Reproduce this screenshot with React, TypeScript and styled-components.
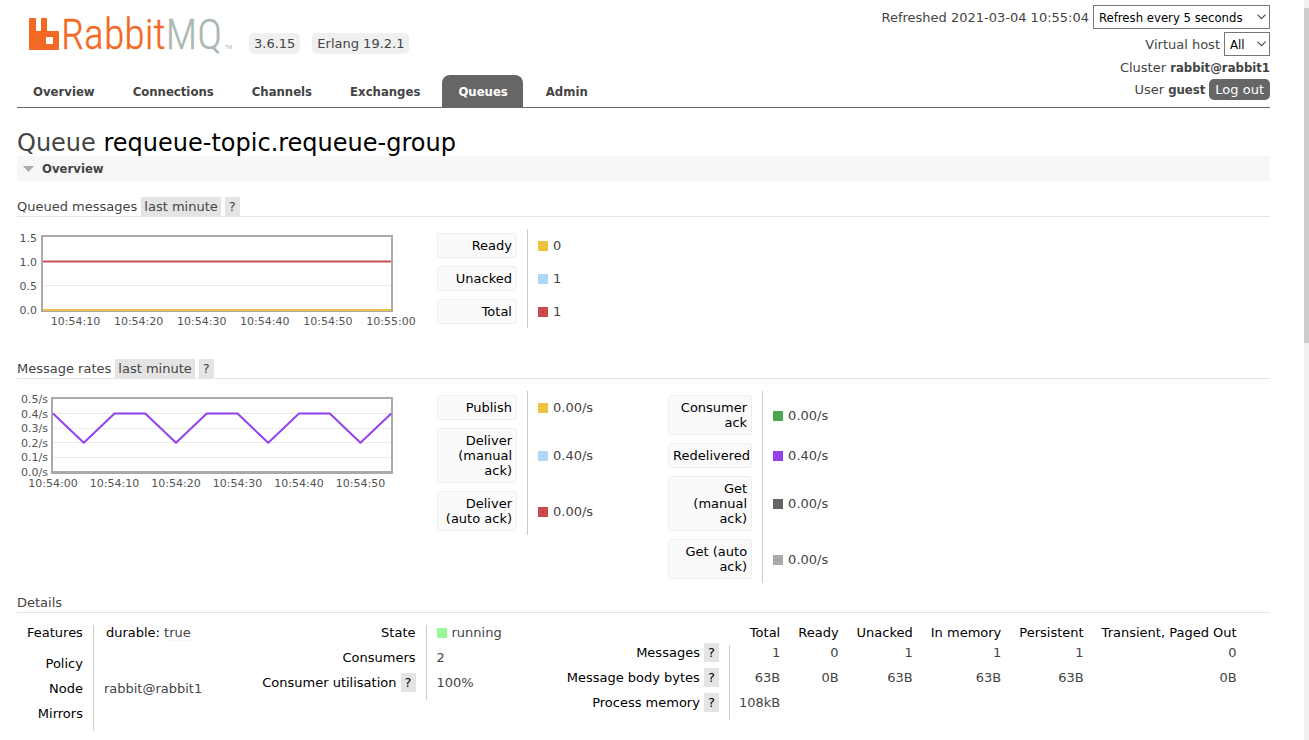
import React from "react";
import styled, { createGlobalStyle } from "styled-components";

const condensed = `"DejaVu Sans Condensed", "Noto Sans", sans-serif`;

const GlobalStyle = createGlobalStyle`
  * { box-sizing: border-box; }
  body {
    margin: 0;
    background: #fff;
    color: #444;
    font: 13px/15px Verdana, "DejaVu Sans", sans-serif;
  }
  button, select { font: inherit; margin: 0; }
`;

const Shell = styled.div`
  display: grid;
  grid-template-columns: minmax(0, 1fr) 5px;
  min-height: 100vh;
`;

const ScrollTrack = styled.div`
  background: #f0f0f0;
  padding-top: 8px;
`;

const ScrollThumb = styled.div`
  height: 335px;
  background: #cdcdcd;
`;

const Page = styled.div`
  padding: 0 34px 8px 17px;
`;

const Header = styled.header`
  display: flex;
  justify-content: space-between;
  border-bottom: 1px solid #666;
`;

const Brand = styled.div`
  display: flex;
  flex-direction: column;
  justify-content: space-between;
`;

const LogoRow = styled.div`
  display: flex;
  align-items: flex-start;
  gap: 12px;
  padding-left: 12px;
`;

const LogoLink = styled.a`
  display: block;
  height: 60px;
  margin-right: 4px;
`;

const Version = styled.span`
  margin-top: 33px;
  padding: 3px 5px;
  border-radius: 5px;
  background: #f0f0f0;
`;

const Tabs = styled.nav`
  display: flex;
  gap: 7px;
`;

const Tab = styled.a<{ $active?: boolean }>`
  padding: 9px 15px 8px 16px;
  border-radius: 8px 8px 0 0;
  font-family: ${condensed};
  font-weight: bold;
  text-decoration: none;
  color: ${(p) => (p.$active ? "#fff" : "#444")};
  background: ${(p) => (p.$active ? "#666" : "transparent")};
`;

const Status = styled.div`
  display: flex;
  flex-direction: column;
  align-items: flex-end;
  gap: 3px;
  padding: 5px 0 7px;
  b { font-family: ${condensed}; }
`;

const StatusRow = styled.div`
  display: flex;
  align-items: center;
  gap: 4px;
  min-height: 17px;
`;

const SelectBox = styled.span`
  position: relative;
  display: block;
  svg {
    position: absolute;
    right: 4px;
    top: 9px;
    pointer-events: none;
  }
`;

const Select = styled.select<{ $width: number }>`
  display: block;
  appearance: none;
  width: ${(p) => p.$width}px;
  height: 24px;
  padding: 0 5px;
  border: 1px solid #767676;
  border-radius: 0;
  background: #fff;
  color: #000;
  font-family: ${condensed};
`;

const LogoutButton = styled.button`
  padding: 3px 6px;
  border: 0;
  border-radius: 5px;
  background: #666;
  color: #fff;
`;

const Title = styled.h1`
  margin: 22px 0 0;
  font-size: 24px;
  line-height: 26px;
  font-weight: normal;
  b { font-weight: normal; color: #000; }
`;

const Band = styled.h2`
  display: flex;
  align-items: center;
  gap: 8px;
  margin: 0 0 16px;
  padding: 5px 6px;
  background: #f7f7f7;
  font-family: ${condensed};
  font-size: 13px;
  line-height: 15px;
`;

const Section = styled.section`
  margin-bottom: 10px;
`;

const SectionTitle = styled.h3`
  display: flex;
  align-items: center;
  gap: 4px;
  height: 20px;
  margin: 0 0 12px;
  border-bottom: 1px solid #e4e4e4;
  font-size: 13px;
  font-weight: normal;
`;

const Chip = styled.button`
  padding: 2px 4px;
  border: 0;
  background: #e4e4e4;
  color: inherit;
`;

const RangeChip = styled(Chip)`
  padding: 2px 3px;
`;

const ChartRow = styled.div`
  display: flex;
  align-items: flex-start;
`;

const ChartSvg = styled.svg`
  display: block;
  flex: none;
  margin-right: 10px;
  text {
    font-size: 11px;
    fill: #545454;
  }
`;

const LegendTable = styled.table`
  border-collapse: collapse;
  margin-right: 65px;
  th {
    padding: 4px 10px 4px 0;
    border-right: 1px solid #ccc;
    font-weight: normal;
  }
  td { padding: 0 10px; }
`;

const LegendButton = styled.button<{ $width: number }>`
  display: block;
  width: ${(p) => p.$width}px;
  padding: 4px;
  border: 1px solid #eee;
  border-radius: 3px;
  background: #fafafa;
  color: #000;
  text-align: right;
`;

const Swatch = styled.span<{ $color: string }>`
  display: inline-block;
  width: 10px;
  height: 10px;
  margin-right: 5px;
  vertical-align: -1px;
  background: ${(p) => p.$color};
`;

const DetailRow = styled.div`
  display: flex;
  align-items: flex-start;
  gap: 40px;
`;

const FactTable = styled.table`
  border-collapse: collapse;
  white-space: nowrap;
  th {
    padding: 0 10px 10px;
    border-right: 1px solid #ccc;
    color: #000;
    font-weight: normal;
    text-align: right;
    vertical-align: top;
  }
  td {
    padding: 0 10px 10px;
    vertical-align: top;
  }
  abbr { text-decoration: none; border-bottom: 1px dotted #eee; }
`;

const Feature = styled.div`
  padding: 0 2px 6px;
  b { font-weight: normal; color: #000; }
`;

const CountTable = styled(FactTable)`
  margin-left: 5px;
  td { padding: 0 9px 10px; text-align: right; }
  thead th, thead td { border: 0; padding: 0 9px 5px; }
`;

const HelpChip = styled(Chip)`
  margin: -2px 0;
`;

const Chevron = () => (
  <svg width="9" height="6" viewBox="0 0 9 6" fill="none" stroke="#444" strokeWidth="1.1" aria-hidden="true">
    <path d="M0.5 0.7 4.5 4.7 8.5 0.7" />
  </svg>
);

const Logo = () => (
  <svg width="204" height="60" viewBox="0 0 204 60" role="img" aria-label="RabbitMQ">
    <path
      fill="#f36822"
      fillRule="evenodd"
      d="M1 18H6Q7 18 7 19V30Q7 31 8 31H11Q12 31 12 30V19Q12 18 13 18H17Q18 18 18 19V30Q18 31 19 31H29Q30 31 30 32V49Q30 50 29 50H1Q0 50 0 49V19Q0 18 1 18ZM18 37Q17 37 17 38V43Q17 44 18 44H23Q24 44 24 43V38Q24 37 23 37Z"
    />
    <text x="32" y="49" fontFamily="'Roboto Condensed', 'Liberation Sans Narrow', sans-serif" fontWeight="300" fontSize="42" fill="#f36822" stroke="#f36822" strokeWidth="0.3">
      Rabbit<tspan fill="#a9b8b2" stroke="#a9b8b2">MQ</tspan>
    </text>
    <text x="196" y="49" fontFamily="'Liberation Sans', sans-serif" fontSize="5" fill="#a9b8b2">TM</text>
  </svg>
);

const QueuedChart = () => (
  <ChartSvg width="410" height="120" viewBox="0 0 410 120" role="img" aria-label="Queued messages">
    <rect x="25" y="7" width="350" height="75" fill="none" stroke="#aaa" strokeWidth="2" />
    <path d="M26 56.5H374" stroke="#ebebeb" />
    <path d="M26 32.5H374" stroke="#cb4b4b" strokeOpacity="0.45" strokeWidth="3" />
    <path d="M26 32.5H374" stroke="#b84a50" />
    <path d="M26 81H374" stroke="#edc240" strokeWidth="2" />
    <g textAnchor="end">
      {["1.5", "1.0", "0.5", "0.0"].map((t, i) => (
        <text key={t} x="20" y={12.5 + i * 24.3}>{t}</text>
      ))}
    </g>
    <g textAnchor="middle">
      {["10:54:10", "10:54:20", "10:54:30", "10:54:40", "10:54:50", "10:55:00"].map((t, i) => (
        <text key={t} x={58.5 + i * 63.1} y="96">{t}</text>
      ))}
    </g>
  </ChartSvg>
);

const ratePoints = [0.4, 0.2, 0.4, 0.4, 0.2, 0.4, 0.4, 0.2, 0.4, 0.4, 0.2, 0.4]
  .map((v, i) => `${36 + i * 30.75},${81 - v * 146}`)
  .join(" ");

const RatesChart = () => (
  <ChartSvg width="410" height="120" viewBox="0 0 410 120" role="img" aria-label="Message rates">
    <path d="M36 22.5H374M36 37.5H374M36 51.5H374M36 66.5H374" stroke="#ebebeb" />
    <rect x="35" y="7" width="340" height="75" fill="none" stroke="#aaa" strokeWidth="2" />
    <path d="M35 81H375" stroke="#aaa" strokeWidth="2" />
    <polyline points={ratePoints} fill="none" stroke="#9440ed" strokeWidth="2" strokeLinejoin="round" />
    <g textAnchor="end">
      {["0.5/s", "0.4/s", "0.3/s", "0.2/s", "0.1/s", "0.0/s"].map((t, i) => (
        <text key={t} x="31" y={12 + i * 14.6}>{t}</text>
      ))}
    </g>
    <g textAnchor="middle">
      {["10:54:00", "10:54:10", "10:54:20", "10:54:30", "10:54:40", "10:54:50"].map((t, i) => (
        <text key={t} x={36 + i * 61.5} y="96">{t}</text>
      ))}
    </g>
  </ChartSvg>
);

type LegendItem = [label: string, color: string, value: string];

const Legend = ({ items, width = 80 }: { items: LegendItem[]; width?: number }) => (
  <LegendTable>
    <tbody>
      {items.map(([label, color, value]) => (
        <tr key={label}>
          <th scope="row"><LegendButton type="button" $width={width}>{label}</LegendButton></th>
          <td><Swatch $color={color} />{value}</td>
        </tr>
      ))}
    </tbody>
  </LegendTable>
);

const queued: LegendItem[] = [
  ["Ready", "#edc240", "0"],
  ["Unacked", "#afd8f8", "1"],
  ["Total", "#cb4b4b", "1"],
];
const ratesLeft: LegendItem[] = [
  ["Publish", "#edc240", "0.00/s"],
  ["Deliver (manual ack)", "#afd8f8", "0.40/s"],
  ["Deliver (auto ack)", "#cb4b4b", "0.00/s"],
];
const ratesRight: LegendItem[] = [
  ["Consumer ack", "#4da74d", "0.00/s"],
  ["Redelivered", "#9440ed", "0.40/s"],
  ["Get (manual ack)", "#666666", "0.00/s"],
  ["Get (auto ack)", "#aaaaaa", "0.00/s"],
];

const tabs = ["Overview", "Connections", "Channels", "Exchanges", "Queues", "Admin"];
const countColumns = ["Total", "Ready", "Unacked", "In memory", "Persistent", "Transient, Paged Out"];
const countRows: [string, string[]][] = [
  ["Messages", ["1", "0", "1", "1", "1", "0"]],
  ["Message body bytes", ["63B", "0B", "63B", "63B", "63B", "0B"]],
  ["Process memory", ["108kB", "", "", "", "", ""]],
];

export default function App() {
  return (
    <Shell>
      <GlobalStyle />
      <Page>
        <Header>
          <Brand>
            <LogoRow>
              <LogoLink href="#/"><Logo /></LogoLink>
              <Version>3.6.15</Version>
              <Version>Erlang 19.2.1</Version>
            </LogoRow>
            <Tabs>
              {tabs.map((t) => (
                <Tab key={t} href={`#/${t.toLowerCase()}`} $active={t === "Queues"}>{t}</Tab>
              ))}
            </Tabs>
          </Brand>
          <Status>
            <StatusRow>
              <label htmlFor="refresh">Refreshed 2021-03-04 10:55:04</label>
              <SelectBox>
                <Select id="refresh" $width={177}><option>Refresh every 5 seconds</option></Select>
                <Chevron />
              </SelectBox>
            </StatusRow>
            <StatusRow>
              <label htmlFor="vhost">Virtual host</label>
              <SelectBox>
                <Select id="vhost" $width={46}><option>All</option></Select>
                <Chevron />
              </SelectBox>
            </StatusRow>
            <StatusRow><span>Cluster <b>rabbit@rabbit1</b></span></StatusRow>
            <StatusRow>
              <span>User <b>guest</b></span>
              <LogoutButton type="button">Log out</LogoutButton>
            </StatusRow>
          </Status>
        </Header>

        <main>
          <Title>Queue <b>requeue-topic.requeue-group</b></Title>
          <Band>
            <svg width="11" height="6" viewBox="0 0 11 6" aria-hidden="true"><path d="M0 0H11L5.5 6Z" fill="#aaa" /></svg>
            Overview
          </Band>

          <Section>
            <SectionTitle>
              Queued messages <RangeChip type="button">last minute</RangeChip><Chip type="button">?</Chip>
            </SectionTitle>
            <ChartRow>
              <QueuedChart />
              <Legend items={queued} />
            </ChartRow>
          </Section>

          <Section>
            <SectionTitle>
              Message rates <RangeChip type="button">last minute</RangeChip><Chip type="button">?</Chip>
            </SectionTitle>
            <ChartRow>
              <RatesChart />
              <Legend items={ratesLeft} />
              <Legend items={ratesRight} width={84} />
            </ChartRow>
          </Section>

          <section>
            <SectionTitle>Details</SectionTitle>
            <DetailRow>
              <FactTable>
                <tbody>
                  <tr>
                    <th scope="row">Features</th>
                    <td><Feature><b>durable:</b> <abbr>true</abbr></Feature></td>
                  </tr>
                  <tr><th scope="row">Policy</th><td /></tr>
                  <tr><th scope="row">Node</th><td>rabbit@rabbit1</td></tr>
                  <tr><th scope="row">Mirrors</th><td /></tr>
                </tbody>
              </FactTable>
              <FactTable>
                <tbody>
                  <tr><th scope="row">State</th><td><Swatch $color="#98f898" />running</td></tr>
                  <tr><th scope="row">Consumers</th><td>2</td></tr>
                  <tr>
                    <th scope="row">Consumer utilisation <HelpChip type="button">?</HelpChip></th>
                    <td>100%</td>
                  </tr>
                </tbody>
              </FactTable>
              <CountTable>
                <thead>
                  <tr>
                    <td />
                    {countColumns.map((c) => <th key={c} scope="col">{c}</th>)}
                  </tr>
                </thead>
                <tbody>
                  {countRows.map(([label, values]) => (
                    <tr key={label}>
                      <th scope="row">{label} <HelpChip type="button">?</HelpChip></th>
                      {values.map((v, i) => <td key={i}>{v}</td>)}
                    </tr>
                  ))}
                </tbody>
              </CountTable>
            </DetailRow>
          </section>
        </main>
      </Page>
      <ScrollTrack><ScrollThumb /></ScrollTrack>
    </Shell>
  );
}
